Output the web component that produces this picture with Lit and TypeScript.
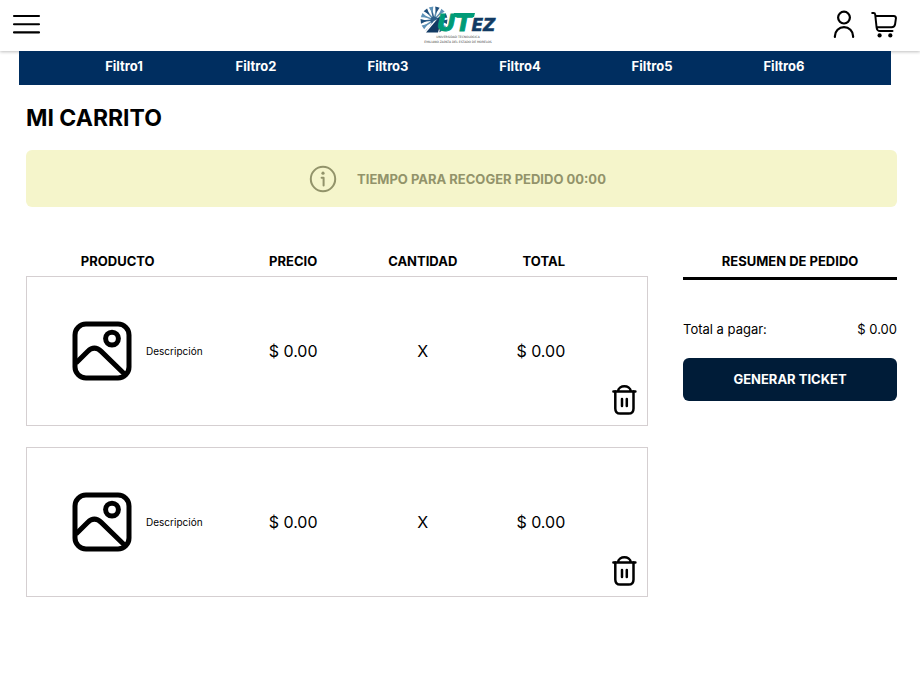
import { LitElement, html, svg, css } from "lit";
import { customElement, state } from "lit/decorators.js";

interface CartItem {
  description: string;
  price: string;
  quantity: string;
  total: string;
}

const base = css`
  * { box-sizing: border-box; }
  button {
    margin: 0;
    padding: 0;
    border: 0;
    background: none;
    color: inherit;
    font: inherit;
    cursor: pointer;
  }
  svg { display: block; fill: none; stroke: currentColor; }
`;

@customElement("utez-logo")
export class UtezLogo extends LitElement {
  static styles = css`
    :host { display: block; }
    svg { display: block; }
    .name { font-family: "DejaVu Sans", sans-serif; font-weight: 700; font-style: italic; }
    .big { font-size: 23px; fill: #009b77; stroke: #009b77; stroke-width: 1px; }
    .mid { font-size: 17px; fill: #123a63; stroke: #123a63; stroke-width: 0.5px; }
    .tiny { font: 3px "DejaVu Sans", sans-serif; fill: #444; text-anchor: middle; }
  `;

  render() {
    const rays = Array.from({ length: 13 }, (_, i) => {
      const a = ((i * 360) / 13 + 8) * (Math.PI / 180);
      const at = (r: number, d = 0) =>
        `${(14 + r * Math.cos(a + d)).toFixed(2)} ${(15 + r * Math.sin(a + d)).toFixed(2)}`;
      return svg`
        <path d="M${at(3)}L${at(13)}" stroke=${i % 3 ? "#5f8fb0" : "#2d5f8a"} stroke-width="1.6"/>
        <path d="M${at(7)}L${at(13.5, -0.17)}L${at(13.5, 0.17)}Z" fill=${i % 2 ? "#5f93b8" : "#1f4f7c"}/>
      `;
    });
    return html`
      <svg width="78" height="40" viewBox="0 0 78 40" role="img" aria-label="UTEZ">
        ${rays}
        <circle cx="14" cy="15" r="3.5" fill="#2d5f8a"/>
        <path d="M14 16L3 29H19L22 12Z" fill="#fff"/>
        <path d="M20 11L6 27.5H18L20 20Z" fill="#123a63"/>
        <text class="name" x="17" y="26"><tspan class="big">UT</tspan><tspan class="mid">EZ</tspan></text>
        <path d="M34 8H55L54 12H33Z" fill="#009b77"/>
        <text class="tiny" x="38" y="33">UNIVERSIDAD TECNOLÓGICA</text>
        <text class="tiny" x="38" y="38">EMILIANO ZAPATA DEL ESTADO DE MORELOS</text>
      </svg>
    `;
  }
}

@customElement("site-header")
export class SiteHeader extends LitElement {
  static styles = [
    base,
    css`
      :host { display: block; }
      .bar {
        display: grid;
        grid-template-columns: 1fr auto 1fr;
        align-items: center;
        height: 51px;
        padding: 0 23px 3px 12px;
        background: #fff;
        box-shadow: 0 1px 3px rgba(0, 0, 0, 0.25);
      }
      .menu { justify-self: start; }
      .logo { padding: 2px 0 0 8px; }
      .actions { display: flex; justify-content: flex-end; gap: 15px; }
      .filters {
        position: relative;
        display: grid;
        grid-template-columns: repeat(6, 1fr);
        margin: 0 29px 0 19px;
        padding: 0 41px 0 39px;
        height: 34px;
        background: #002e60;
      }
      .filter {
        color: #fff;
        font-size: 13px;
        font-weight: 700;
        line-height: 30px;
        text-align: center;
        text-decoration: none;
      }
    `,
  ];

  render() {
    return html`
      <header class="bar">
        <button class="menu" aria-label="Menú">
          <svg width="29" height="22" viewBox="0 0 29 22" stroke-width="2.1" stroke-linecap="round">
            <path d="M2 3H27M2 11.2H27M2 19.4H27"/>
          </svg>
        </button>
        <utez-logo class="logo"></utez-logo>
        <div class="actions">
          <button aria-label="Cuenta">
            <svg width="24" height="30" viewBox="0 0 24 30" stroke-width="2.2" stroke-linecap="round">
              <circle cx="12" cy="8.6" r="5.9"/>
              <path d="M2.9 28V27.2a9.1 9.1 0 0 1 18.2 0V28"/>
            </svg>
          </button>
          <button aria-label="Carrito">
            <svg width="26" height="30" viewBox="0 0 26 30" stroke-width="2" stroke-linecap="round" stroke-linejoin="round">
              <path d="M1.2 3.9H2.6Q4 3.9 4.2 5.5L5.6 18.5Q6 22.1 9 22.1H21.5M4.3 7.1H22.7Q25.2 7.1 24.9 9.5L24.1 15.1Q23.6 18.3 20.5 18.3H5.7"/>
              <circle cx="8.6" cy="26.4" r="2.1" fill="currentColor" stroke="none"/>
              <circle cx="19.3" cy="26.4" r="2.1" fill="currentColor" stroke="none"/>
            </svg>
          </button>
        </div>
      </header>
      <nav class="filters" aria-label="Filtros">
        ${[1, 2, 3, 4, 5, 6].map((n) => html`<a class="filter" href="#filtro${n}">Filtro${n}</a>`)}
      </nav>
    `;
  }
}

@customElement("cart-table")
export class CartTable extends LitElement {
  @state() private items: CartItem[] = [
    { description: "Descripción", price: "$ 0.00", quantity: "X", total: "$ 0.00" },
    { description: "Descripción", price: "$ 0.00", quantity: "X", total: "$ 0.00" },
  ];

  static styles = [
    base,
    css`
      :host { display: block; }
      .table { display: block; }
      .body { display: grid; gap: 21px; }
      .row {
        display: grid;
        grid-template-columns: 202fr 130fr 130fr 113fr 47fr;
        align-items: center;
        border: 1px solid transparent;
      }
      .item { min-height: 150px; border-color: #d5cfd1; }
      .head {
        padding: 0;
        font-size: 13px;
        font-weight: 700;
        line-height: 16px;
        text-align: center;
      }
      .headings { padding-bottom: 6px; }
      .first { padding-right: 20px; }
      .cell { padding: 0; font-size: 16px; line-height: 20px; text-align: center; }
      .total { padding-right: 6px; }
      .product {
        display: flex;
        align-items: center;
        gap: 14px;
        padding-left: 45px;
        font-size: 10px;
      }
      .remove {
        align-self: end;
        display: flex;
        justify-content: center;
        padding-bottom: 9px;
      }
    `,
  ];

  private remove(index: number) {
    this.items = this.items.filter((_, i) => i !== index);
  }

  render() {
    return html`
      <table class="table">
        <thead class="table">
          <tr class="row headings">
            <th class="head first" scope="col">PRODUCTO</th>
            <th class="head" scope="col">PRECIO</th>
            <th class="head" scope="col">CANTIDAD</th>
            <th class="head" scope="col">TOTAL</th>
          </tr>
        </thead>
        <tbody class="body">
          ${this.items.map(
            (item, i) => html`
              <tr class="row item">
                <td class="cell product">
                  <svg width="60" height="60" viewBox="0 0 60 60" stroke-width="5" aria-hidden="true">
                    <rect x="3" y="3" width="54" height="54" rx="11"/>
                    <circle cx="40" cy="17.6" r="6.4"/>
                    <path d="M4 42L15.6 30.4Q22.4 23.8 29.2 30.4L54 54.5"/>
                  </svg>
                  <span>${item.description}</span>
                </td>
                <td class="cell">${item.price}</td>
                <td class="cell">${item.quantity}</td>
                <td class="cell total">${item.total}</td>
                <td class="cell remove">
                  <button aria-label="Eliminar" @click=${() => this.remove(i)}>
                    <svg width="26" height="32" viewBox="0 0 26 32" stroke-width="2.5" stroke-linecap="round">
                      <path d="M2.4 7.4H24.4M7 7C7.8 0.8 19 0.8 19.8 7"/>
                      <path d="M4.3 7.5V24.4Q4.3 29.6 9.3 29.6H17.5Q22.5 29.6 22.5 24.4V7.5M11 15V22M15.8 15V22"/>
                    </svg>
                  </button>
                </td>
              </tr>
            `
          )}
        </tbody>
      </table>
    `;
  }
}

@customElement("order-summary")
export class OrderSummary extends LitElement {
  static styles = [
    base,
    css`
      :host { display: block; font-size: 13px; line-height: 16px; }
      .title {
        margin: 0 0 41px;
        padding: 1px 0 8px;
        border-bottom: 3px solid #000;
        font-size: 13px;
        font-weight: 700;
        text-align: center;
      }
      .line { display: flex; justify-content: space-between; margin-bottom: 21px; }
      .generate {
        width: 100%;
        height: 43px;
        padding-bottom: 1px;
        border-radius: 6px;
        background: #001c38;
        color: #fff;
        font-weight: 700;
      }
    `,
  ];

  render() {
    return html`
      <h2 class="title">RESUMEN DE PEDIDO</h2>
      <div class="line"><span>Total a pagar:</span><span>$ 0.00</span></div>
      <button class="generate">GENERAR TICKET</button>
    `;
  }
}

@customElement("app-root")
export class AppRoot extends LitElement {
  static styles = [
    base,
    css`
      :host {
        display: block;
        min-height: 100vh;
        background: #fff;
        color: #000;
        font-family: Inter, sans-serif;
      }
      .page { padding: 18px 23px 24px 26px; }
      .heading { margin: 0 0 17px; font-size: 23px; font-weight: 700; line-height: 30px; }
      .notice {
        display: flex;
        align-items: center;
        justify-content: center;
        gap: 20px;
        min-height: 57px;
        padding-right: 8px;
        border-radius: 6px;
        background: #f5f5cb;
        color: #92936a;
        font-size: 13px;
        font-weight: 700;
      }
      .columns {
        display: grid;
        grid-template-columns: 622fr 214fr;
        align-items: start;
        gap: 35px;
        margin-top: 45px;
      }
    `,
  ];

  render() {
    return html`
      <site-header></site-header>
      <main class="page">
        <h1 class="heading">MI CARRITO</h1>
        <div class="notice" role="status">
          <svg width="28" height="28" viewBox="0 0 28 28" stroke-width="2" stroke-linecap="round" stroke-linejoin="round" aria-hidden="true">
            <circle cx="14" cy="14" r="12.2"/>
            <path d="M12.6 12.8H14.6V20.4"/>
            <circle cx="14" cy="8.2" r="1.6" fill="currentColor" stroke="none"/>
          </svg>
          <span>TIEMPO PARA RECOGER PEDIDO 00:00</span>
        </div>
        <div class="columns">
          <cart-table></cart-table>
          <order-summary></order-summary>
        </div>
      </main>
    `;
  }
}
